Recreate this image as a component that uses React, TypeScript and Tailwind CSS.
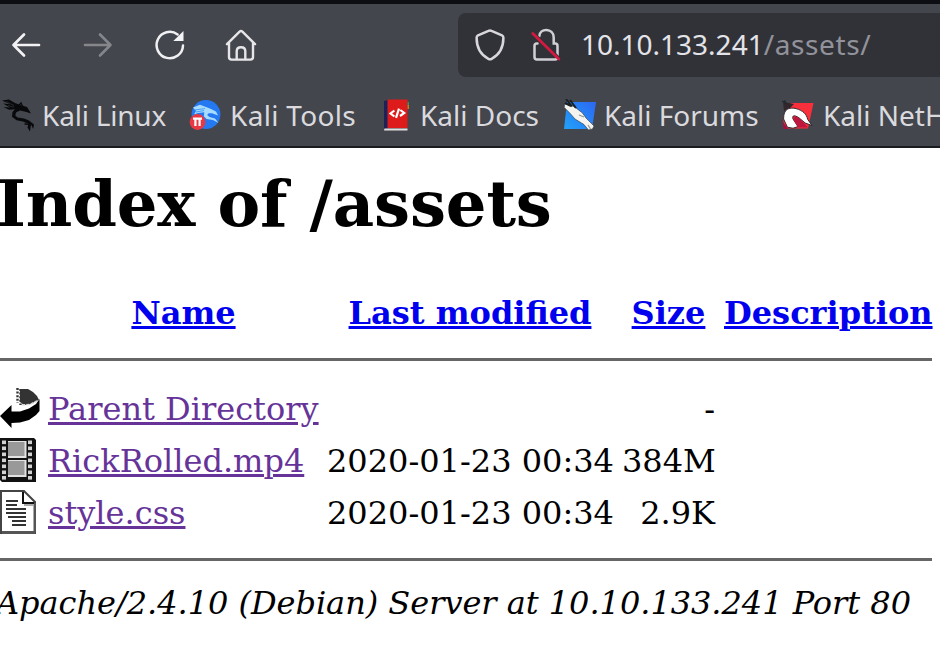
import type { ReactNode } from "react";

const UI_FONT = "font-['Noto_Sans','Open_Sans',sans-serif]";

function BackIcon() {
  return (
    <svg className="shrink-0" width="30" height="26" viewBox="0 0 30 26" fill="none" stroke="#f2f2f4" strokeWidth="2.7" strokeLinecap="round" strokeLinejoin="round">
      <path d="M28 13H2.5M13 2.5L2.5 13L13 23.5" />
    </svg>
  );
}

function ForwardIcon() {
  return (
    <svg width="30" height="26" viewBox="0 0 30 26" fill="none" stroke="#85868c" strokeWidth="2.6" strokeLinecap="round" strokeLinejoin="round">
      <path d="M2 13H27.5M17 2.5L27.5 13L17 23.5" />
    </svg>
  );
}

function ReloadIcon() {
  return (
    <svg width="30" height="30" viewBox="0 0 30 30" fill="none">
      <path d="M28 15.5A13.2 13.2 0 1 1 22.6 4.4" stroke="#f0f0f2" strokeWidth="2.5" strokeLinecap="round" />
      <path d="M28.5 1V11H18.3Z" fill="#f4f4f6" />
    </svg>
  );
}

function HomeIcon() {
  return (
    <svg width="32" height="32" viewBox="0 0 32 32" fill="none" stroke="#e6e6e9" strokeWidth="2.4" strokeLinejoin="round" strokeLinecap="round">
      <path d="M2 15.2L14.6 2.6Q16 1.4 17.4 2.6L30 15.2" />
      <path d="M4 14V28Q4 30.6 6.6 30.6H25.4Q28 30.6 28 28V14" />
      <path d="M11.7 30V22.2Q11.7 18.2 16 18.2Q20.3 18.2 20.3 22.2V30" />
    </svg>
  );
}

function ShieldIcon() {
  return (
    <svg width="32" height="34" viewBox="0 0 32 34" fill="none" stroke="#d8d8dc" strokeWidth="2.5" strokeLinejoin="round">
      <path d="M16 2.4Q16.8 2.4 17.5 2.8L28 7.3Q29.4 8 29.4 9.8C29.4 18 26 26.5 17.6 30.8Q16 31.6 14.4 30.8C6 26.5 2.6 18 2.6 9.8Q2.6 8 4 7.3L14.5 2.8Q15.2 2.4 16 2.4Z" />
    </svg>
  );
}

function InsecureLockIcon() {
  return (
    <svg width="30" height="34" viewBox="0 0 30 34" fill="none">
      <path d="M6.5 15.5H5.8Q3.5 15.5 3.5 17.8V29Q3.5 31.5 6 31.5H24Q26.5 31.5 26.5 29V17.8Q26.5 15.5 24.2 15.5H22.7V9.4C22.7 -.4 8.4 -.4 8.3 8.2" stroke="#d0d0d4" strokeWidth="2.5" strokeLinecap="round" />
      <path d="M5.5 8L29 31" stroke="#313238" strokeWidth="3" />
      <path d="M1.8 5.4L27.8 31" stroke="#d3193f" strokeWidth="2.8" strokeLinecap="round" />
    </svg>
  );
}

function DragonIcon() {
  return (
    <svg width="34" height="34" viewBox="0 0 34 34" fill="none">
      <path d="M2 2.5L9 1.5L15 5L21 7.3L27 9L31 15.5L25.5 13.7L20 12.6L16 14.4L15.3 17.5L17.5 19.4L24 20.6L29 22.5L34 26.5L33.2 31L31 26.6L30 33.5L27.5 29.5L28.4 26L23 23.4L16.5 22.2L12 18.8L12.5 14L15 11.2L9 11.8L3.5 9L10 9.4L3 5.5L10 6.3Z" fill="#08090b" />
      <path d="M18.5 7.8L21 5L22.5 8M24.5 26L29.5 26.3" stroke="#08090b" strokeWidth="1.3" />
      <path d="M6 3.5L14 7.5M8 7.6L14 9.2" stroke="#44464d" strokeWidth=".5" />
    </svg>
  );
}

function ToolsIcon() {
  return (
    <svg width="32" height="30" viewBox="0 0 32 30" fill="none">
      <circle cx="17" cy="14.5" r="14.4" fill="#2478f2" />
      <path d="M4 7.5L11 4.8L17 7L22 9L27 11.5L29 15.5L23 13.2L19.5 13.2L18.2 15.1L20.5 17L26 18.4L29.5 23L24 20L17.5 19L14.8 16.2L15.3 12.2L9 13L5 14.5L7 11Z" fill="#a8dcff" />
      <path d="M6 10L16 8.6M7 12L15 10.6" stroke="#2c8ff5" strokeWidth=".8" />
      <circle cx="8.5" cy="22" r="7.9" fill="#e93843" />
      <path d="M4 18.7H13M6.4 19V26M10.6 19V26" stroke="#fff" strokeWidth="2.2" />
    </svg>
  );
}

function DocsIcon() {
  return (
    <svg width="27" height="32" viewBox="0 0 27 32" fill="none">
      <path d="M1 2L5 1V29L1 31Z" fill="#1c2258" />
      <path d="M4.5 .5H24.5V29H4.5Z" fill="#de1b1b" />
      <path d="M1.4 29.4H24.5V31.5H1Z" fill="#e4dddb" />
      <path d="M24.5 3H26V6H24.5Z" fill="#418d55" />
      <path d="M24.5 6H26V10H24.5Z" fill="#c77b27" />
      <path d="M11.4 11.5L7.5 14.5L11.4 17.5M13 18.8L16 9.7M17.3 11L21.2 14L17 17" stroke="#fff" strokeWidth="2.2" />
    </svg>
  );
}

function ForumsIcon() {
  return (
    <svg width="34" height="32" viewBox="0 0 34 32" fill="none">
      <defs>
        <linearGradient id="forum" x1="3" y1="30" x2="31" y2="4" gradientUnits="userSpaceOnUse">
          <stop stopColor="#22a0fa" />
          <stop offset="1" stopColor="#2b6af2" />
        </linearGradient>
      </defs>
      <path d="M4 3H33L29 30H1Z" fill="url(#forum)" />
      <path d="M1.5 5L8 6L13 9L19.5 14L23 19L31 27L29.5 30L25.5 31L21 25.6L12 20L7 14.3L1.3 8.5Z" fill="#f5f3ef" stroke="#27363d" strokeWidth=".6" />
      <path d="M3 0L9 7.5M7 1L13 9M2 4L8 7" stroke="#1b2021" strokeWidth="2" />
      <path d="M16 16L21 18M25 26L27.5 30" stroke="#8f9795" strokeWidth="1.2" />
    </svg>
  );
}

function NetHunterIcon() {
  return (
    <svg width="34" height="32" viewBox="0 0 34 32" fill="none">
      <path d="M10 4H32.5L27 29.5H3L2 18Z" fill="#f92f3c" />
      <path d="M2 3L13 5L7 11L3 12Z" fill="#33272e" />
      <path d="M2 23L7 30H2.5Z" fill="#a50f42" />
      <path d="M6.4 28.2L2.6 20C2.4 10 8 8 15 9.6C22 11.6 25.5 15 26.7 20.4L31 26.5L24.2 24L18.2 19C13.8 15.8 10.7 16 12 20L17 27.6L12 29.2Z" fill="#fff" stroke="#281d23" strokeWidth=".9" />
      <path d="M12.5 21C11.8 16.8 16.7 17.1 21 22L27 28.5H17Z" fill="#bd1740" />
      <path d="M1 2L4 3.5L7 5M4 1V5" stroke="#25282c" strokeWidth="1.2" />
    </svg>
  );
}

function ParentIcon() {
  return (
    <svg className="-mt-[2px]" width="40" height="44" viewBox="0 0 40 44" fill="none">
      <path d="M20 3H28L33 6L37 10L39 14L36 15L31 18L24 19L20 16Z" fill="#333" />
      <path d="M17.5 2V17M20.5 3V19" stroke="#333" strokeWidth="2.4" strokeDasharray="2 1.6" />
      <path d="M22 19L30 18.5L37 15" stroke="#ddd" strokeWidth="1.6" strokeDasharray="3 1.4" />
      <path d="M0 30L11.5 19V25.5L20 25.5L29 22.5L36 18L39.5 13V25L36 29L29 34L20 36.5L11.5 37V42Z" fill="#000" />
    </svg>
  );
}

function MovieIcon() {
  return (
    <svg className="-mt-[2px]" width="36" height="44" viewBox="0 0 36 44">
      <path d="M0 0H34L36 2V44H2L0 42Z" fill="#111" />
      {[2.5, 8.5, 14.5, 20.5, 26.5, 32.5, 38].map((y) => (
        <g key={y} fill="#d2d2d2">
          <rect x="2" y={y} width="4" height="3.6" />
          <rect x="28" y={y} width="4" height="3.6" />
        </g>
      ))}
      <path d="M8 3H26.5V20H8ZM8 22H26.5V39H8Z" fill="#e2e2e2" />
      <path d="M8 4H24.5V18H8ZM8 23H24.5V37H8Z" fill="#999" />
    </svg>
  );
}

function TextFileIcon() {
  return (
    <svg className="-mt-[2px]" width="36" height="44" viewBox="0 0 36 44" fill="none">
      <path d="M1 1H24L35 12V43H1Z" fill="#fff" stroke="#444" strokeWidth="2" />
      <path d="M2 42.5H35M35 13V42" stroke="#555" strokeWidth="3" />
      <path d="M23 2V13H34" stroke="#111" strokeWidth="2" />
      <path d="M24 15H33" stroke="#aaa" strokeWidth="2" />
      <path d="M6 11H18M6 15H17M6 19H26M6 23H26M8 27H26M12 31H26M12 35H26" stroke="#333" strokeWidth="2" />
    </svg>
  );
}

function Bookmark({ icon, className, children }: { icon: ReactNode; className: string; children: ReactNode }) {
  return (
    <a className={`flex shrink-0 items-center ${className}`}>
      {icon}
      <span className="whitespace-nowrap">{children}</span>
    </a>
  );
}

const ROW = "grid grid-cols-[48px_271px_8px_286px_9px_93px_9px_208px] items-center";

const files = [
  { icon: <ParentIcon />, name: "Parent Directory", date: "", size: "-" },
  { icon: <MovieIcon />, name: "RickRolled.mp4", date: "2020-01-23 00:34", size: "384M" },
  { icon: <TextFileIcon />, name: "style.css", date: "2020-01-23 00:34", size: "2.9K" },
];

export default function App() {
  return (
    <div className="h-[646px] w-[940px] overflow-hidden bg-white">
      <header className={`h-[148px] border-t-4 border-b-2 border-t-[#0d0e14] border-b-[#1b1c20] bg-[#44464d] ${UI_FONT}`}>
        <nav className="flex h-[81px] items-center pl-[11px]">
          <BackIcon />
          <span className="ml-[42px]"><ForwardIcon /></span>
          <span className="ml-[42px]"><ReloadIcon /></span>
          <span className="ml-[40px]"><HomeIcon /></span>
          <div className="ml-[201px] flex h-16 min-w-0 flex-1 items-center rounded-l-lg bg-[#313238] pl-[16px]">
            <ShieldIcon />
            <span className="ml-[25px]"><InsecureLockIcon /></span>
            <span className="ml-[20px] -mt-[2px] text-[28px] whitespace-nowrap text-[#e4e4e8]">10.10.133.241<span className="tracking-[0.6px] text-[#92939a]">/assets/</span></span>
          </div>
        </nav>
        <div className="flex h-[60px] items-center text-[28px] text-[#dadade]">
          <Bookmark icon={<DragonIcon />} className="w-[189px] gap-2 tracking-[-0.2px]">Kali Linux</Bookmark>
          <Bookmark icon={<ToolsIcon />} className="w-[194px] gap-[9px] tracking-[0.3px]">Kali Tools</Bookmark>
          <Bookmark icon={<DocsIcon />} className="w-[180px] gap-[10px]">Kali Docs</Bookmark>
          <Bookmark icon={<ForumsIcon />} className="w-[218px] gap-[7px]">Kali Forums</Bookmark>
          <Bookmark icon={<NetHunterIcon />} className="gap-[8px]">Kali NetHunter</Bookmark>
        </div>
      </header>
      <main className="font-['DejaVu_Serif',serif] text-[32px] text-black">
        <h1 className="-ml-[4px] pt-[18px] text-[64px] leading-[75px] font-bold tracking-[-0.15px] whitespace-nowrap">Index of /assets</h1>
        <div className={`${ROW} mt-[48px] h-[46px] text-center font-bold whitespace-nowrap text-[#0000ee]`}>
          <span className="col-start-2"><a className="underline">Name</a></span>
          <span className="col-start-4"><a className="underline">Last modified</a></span>
          <span className="col-start-6"><a className="underline">Size</a></span>
          <span className="col-start-8"><a className="underline">Description</a></span>
        </div>
        <hr className="mt-[23px] w-[932px] border-t-[3px] border-[#666]" />
        <div className="pt-[22px]">
          {files.map((file) => (
            <div key={file.name} className={`${ROW} h-[52px] whitespace-nowrap`}>
              {file.icon}
              <a className="text-[#663399] underline">{file.name}</a>
              <span className="col-start-4 text-right">{file.date}</span>
              <span className="col-start-6 text-right">{file.size}</span>
            </div>
          ))}
        </div>
        <hr className="mt-[19px] w-[932px] border-t-[3px] border-[#666]" />
        <address className="-ml-[4px] mt-[21px] leading-[42px] tracking-[-0.03px] whitespace-nowrap italic">Apache/2.4.10 (Debian) Server at 10.10.133.241 Port 80</address>
      </main>
    </div>
  );
}
